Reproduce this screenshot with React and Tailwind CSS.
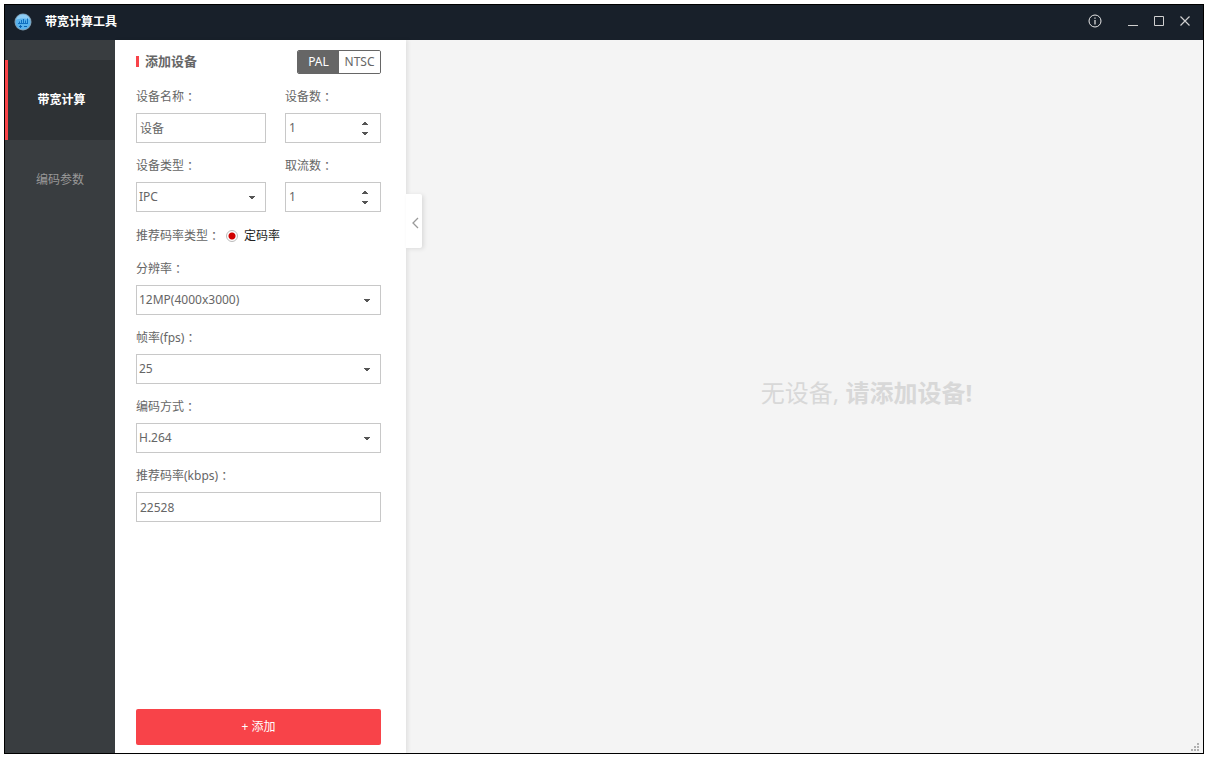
import React, { useState } from 'react';

const tabs = ['带宽计算', '编码参数'];

const Colon = () => <span className="ml-[3px]">：</span>;

const Logo = () => (
  <svg width="18" height="18" viewBox="0 0 18 18" aria-hidden="true">
    <circle cx="9" cy="9" r="8.5" fill="#7f9db3" />
    <circle cx="9" cy="9" r="7.5" fill="#58b2ec" />
    <path d="M2 7a7.2 7.2 0 0 1 14 0c-3-2-11-2-14 0z" fill="#8dcdf5" />
    <path d="M5.500 10.500V8.500M7.500 10.500V7M9.500 10.500V6M11.500 10.500V7.500M13.500 10.500V5.500" stroke="#0f6fc0" strokeWidth="1" />
    <path d="M4 10.500h10" stroke="#0f6fc0" strokeWidth="1" />
    <path d="M5 13.500h3M6.500 12v3M10 13.500h3" stroke="#0b62b0" strokeWidth="1" />
  </svg>
);

const Caret = ({ up, className = '' }) => (
  <svg width="7" height="4" viewBox="0 0 7 4" className={className} shapeRendering="crispEdges" aria-hidden="true">
    <path d={up ? 'M0 4h6V3H5V2H4V1H2v1H1v1H0z' : 'M0 1h6v1H5v1H4v1H2V3H1V2H0z'} fill="#555" />
  </svg>
);

const Field = ({ id, label, children, className = '' }) => (
  <div className={`flex flex-col gap-1.5 ${className}`}>
    <label htmlFor={id} className="h-5 leading-5">{label}<Colon /></label>
    {children}
  </div>
);

const TextInput = ({ id, value, onChange }) => (
  <input
    id={id}
    type="text"
    value={value}
    onChange={(e) => onChange(e.target.value)}
    className="h-[30px] w-full border border-[#c8c8c8] bg-white px-[3px] outline-none focus:border-[#888]"
  />
);

const NumberInput = ({ id, value, onChange }) => (
  <div className="flex h-[30px] border border-[#c8c8c8] bg-white">
    <input
      id={id}
      type="number"
      min="1"
      value={value}
      onChange={(e) => onChange(Number(e.target.value))}
      className="min-w-0 flex-1 appearance-none px-[3px] outline-none [-moz-appearance:textfield] [&::-webkit-inner-spin-button]:appearance-none"
    />
    <div className="flex w-[30px] flex-col justify-center">
      <button type="button" aria-label="增加" onClick={() => onChange(value + 1)} className="flex h-[10px] items-center justify-center">
        <Caret up />
      </button>
      <button type="button" aria-label="减少" onClick={() => onChange(Math.max(1, value - 1))} className="flex h-[10px] items-center justify-center">
        <Caret />
      </button>
    </div>
  </div>
);

const Select = ({ id, options }) => (
  <div className="grid items-center">
    <select id={id} className="col-start-1 row-start-1 h-[30px] w-full appearance-none border border-[#c8c8c8] bg-white pr-6 pl-0.5 outline-none">
      {options.map((o) => <option key={o}>{o}</option>)}
    </select>
    <Caret className="pointer-events-none col-start-1 row-start-1 mr-2.5 justify-self-end" />
  </div>
);

const TitleBar = () => (
  <header className="flex h-[35px] shrink-0 items-center justify-between bg-[#18202a] pr-[11px] pl-[9px]">
    <div className="flex items-center gap-[13px] pb-px">
      <Logo />
      <h1 className="font-bold text-white">带宽计算工具</h1>
    </div>
    <div className="flex items-center pb-[3px] text-[#d0d0d0]">
      <button type="button" aria-label="关于" className="mr-6">
        <svg width="14" height="14" viewBox="0 0 14 14" fill="none" stroke="#e8e8e8">
          <circle cx="7" cy="7" r="6" />
          <path d="M7 6v4.500M7 3.500v1.300" strokeWidth="1.200" />
        </svg>
      </button>
      <div className="flex items-center gap-3">
        <button type="button" aria-label="最小化">
          <svg width="14" height="14" viewBox="0 0 14 14" fill="none" stroke="currentColor"><path d="M2 11.500h10" /></svg>
        </button>
        <button type="button" aria-label="最大化">
          <svg width="14" height="14" viewBox="0 0 14 14" fill="none" stroke="currentColor"><path d="M2.500 2.500h9v9h-9z" /></svg>
        </button>
        <button type="button" aria-label="关闭">
          <svg width="14" height="14" viewBox="0 0 14 14" fill="none" stroke="currentColor"><path d="M2.500 2.500l9 9M11.500 2.500l-9 9" strokeWidth="1.200" /></svg>
        </button>
      </div>
    </div>
  </header>
);

const Sidebar = ({ active, setActive }) => (
  <nav className="flex w-[110px] shrink-0 flex-col bg-[#393d40] pt-5">
    {tabs.map((tab) => (
      <button
        key={tab}
        type="button"
        onClick={() => setActive(tab)}
        className={active === tab
          ? 'h-20 border-l-3 border-[#f84349] bg-[#2e3235] font-bold text-white'
          : 'h-20 text-[#999]'}
      >
        {tab}
      </button>
    ))}
  </nav>
);

const DevicePanel = () => {
  const [standard, setStandard] = useState('PAL');
  const [name, setName] = useState('设备');
  const [count, setCount] = useState(1);
  const [streams, setStreams] = useState(1);
  const [bitrate, setBitrate] = useState('22528');

  return (
    <section className="relative z-10 flex w-[291px] shrink-0 flex-col bg-white pt-2.5 pr-[25px] pb-2 pl-[21px] shadow-[2px_0_4px_rgba(0,0,0,0.08)]">
      {/* Heading and video standard */}
      <div className="flex h-6 items-center justify-between">
        <h2 className="flex items-center gap-1.5 text-[13px] font-bold">
          <span className="h-[11px] w-[3px] bg-[#f84349]" />添加设备
        </h2>
        <div className="flex h-6 w-[84px] overflow-hidden rounded-xs border border-[#666]">
          {['PAL', 'NTSC'].map((s) => (
            <button
              key={s}
              type="button"
              onClick={() => setStandard(s)}
              className={`flex-1 ${standard === s ? 'bg-[#666] text-white' : 'bg-white'}`}
            >
              {s}
            </button>
          ))}
        </div>
      </div>

      <form className="mt-[13px] flex flex-1 flex-col gap-[13px]" onSubmit={(e) => e.preventDefault()}>
        <div className="flex gap-[19px]">
          <Field id="name" label="设备名称" className="min-w-0 flex-1">
            <TextInput id="name" value={name} onChange={setName} />
          </Field>
          <Field id="count" label="设备数" className="w-24">
            <NumberInput id="count" value={count} onChange={setCount} />
          </Field>
        </div>
        <div className="flex gap-[19px]">
          <Field id="type" label="设备类型" className="min-w-0 flex-1">
            <Select id="type" options={['IPC', 'DVR', 'NVR']} />
          </Field>
          <Field id="streams" label="取流数" className="w-24">
            <NumberInput id="streams" value={streams} onChange={setStreams} />
          </Field>
        </div>
        <div className="flex h-[21px] items-center gap-[3px]" role="radiogroup" aria-label="推荐码率类型">
          <span>推荐码率类型<Colon /></span>
          <label className="flex items-center gap-1.5 text-[#222]">
            <input
              type="radio"
              name="rateType"
              defaultChecked
              className="size-3 appearance-none rounded-full border border-[#bbb] bg-white checked:bg-[radial-gradient(circle,#d00000_3px,#fff_4px)]"
            />
            定码率
          </label>
        </div>
        <Field id="resolution" label="分辨率">
          <Select id="resolution" options={['12MP(4000x3000)', '8MP(3840x2160)', '1080P(1920x1080)']} />
        </Field>
        <Field id="fps" label="帧率(fps)">
          <Select id="fps" options={['25', '20', '15', '12']} />
        </Field>
        <Field id="codec" label="编码方式">
          <Select id="codec" options={['H.264', 'H.265']} />
        </Field>
        <Field id="bitrate" label="推荐码率(kbps)">
          <TextInput id="bitrate" value={bitrate} onChange={setBitrate} />
        </Field>
        <button type="submit" className="mt-auto h-9 rounded-xs bg-[#f84349] text-white">+ 添加</button>
      </form>

      {/* Collapse handle */}
      <button
        type="button"
        aria-label="收起"
        className="absolute top-[154px] left-full flex h-[54px] w-4 items-center justify-center rounded-r-xs bg-white pt-1 pl-0.5 shadow-[2px_1px_4px_rgba(0,0,0,0.1)]"
      >
        <svg width="8" height="12" viewBox="0 0 8 12" fill="none" stroke="#999" strokeWidth="1.300"><path d="M7 1L2 6l5 5" /></svg>
      </button>
    </section>
  );
};

export default function App() {
  const [active, setActive] = useState(tabs[0]);

  return (
    <div className="flex min-h-screen bg-white pt-1 pr-[5px] pb-[5px] pl-1 font-['Noto_Sans','Noto_Sans_CJK_SC',sans-serif] text-xs text-[#666]">
      <div className="flex min-w-0 flex-1 flex-col border border-black">
        <TitleBar />
        <div className="flex flex-1">
          <Sidebar active={active} setActive={setActive} />
          <DevicePanel />
          <main className="relative flex flex-1 items-center justify-center bg-[#f4f4f4] pb-2 pl-[124px]">
            <p className="text-2xl text-[#d8d8d8]">无设备, <strong>请添加设备!</strong></p>
            <svg width="8" height="8" viewBox="0 0 8 8" className="absolute right-1 bottom-0.5" fill="#b0b0b0" aria-hidden="true">
              <path d="M6 0h2v2H6zM3 3h2v2H3zM6 3h2v2H6zM0 6h2v2H0zM3 6h2v2H3zM6 6h2v2H6z" />
            </svg>
          </main>
        </div>
      </div>
    </div>
  );
}
